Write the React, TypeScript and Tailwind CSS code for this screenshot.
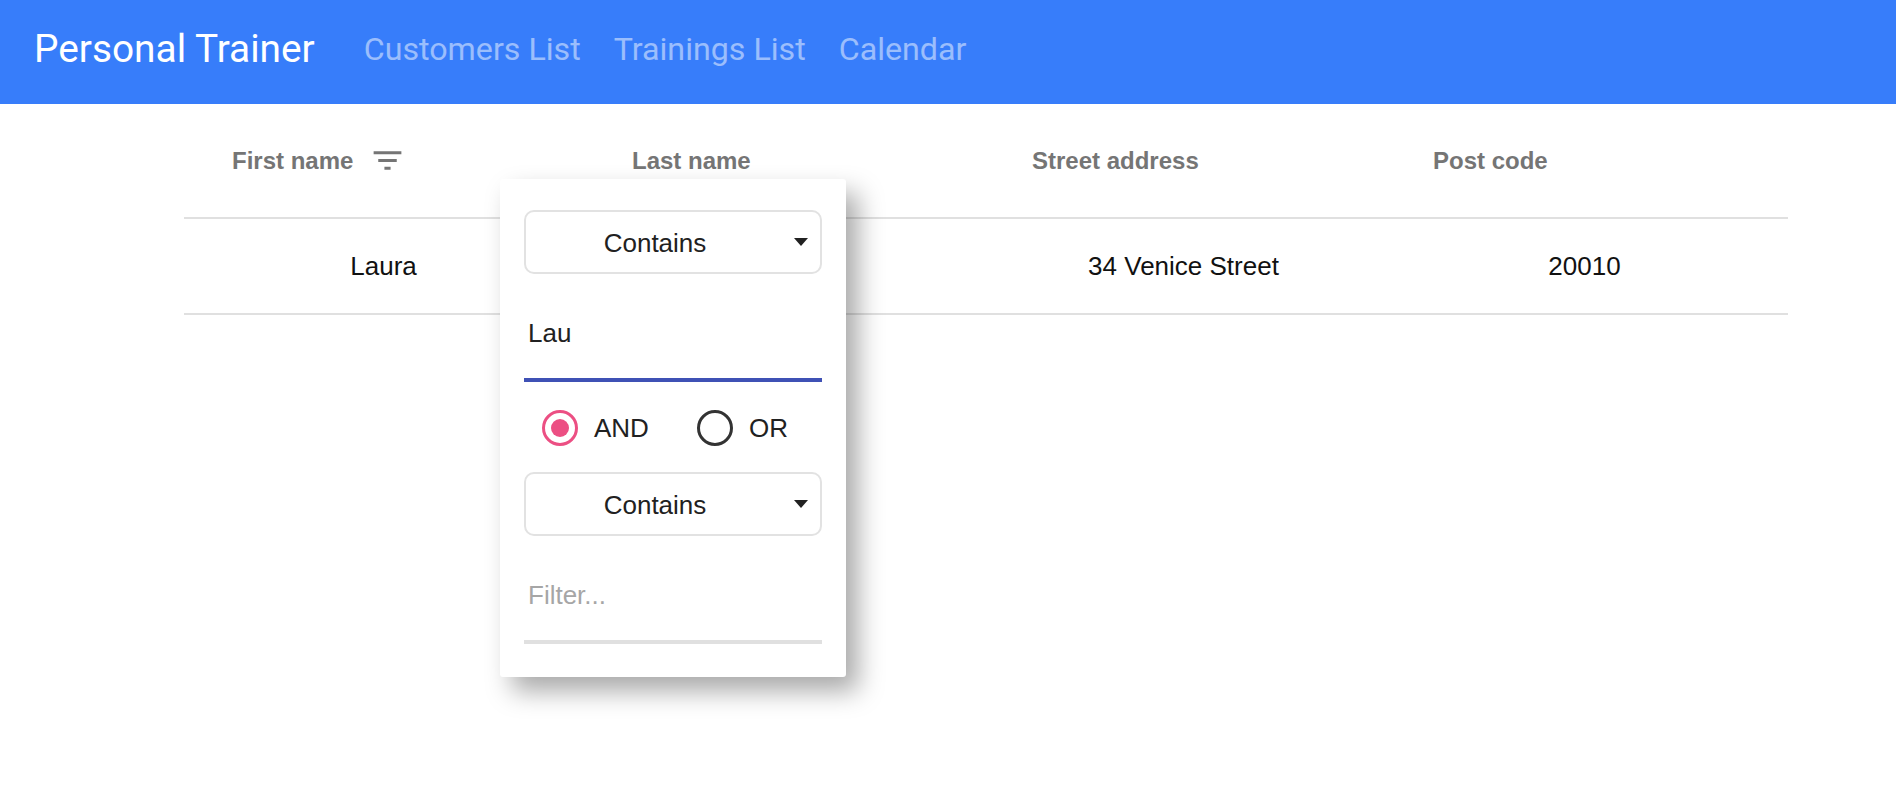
const sans = "font-['Liberation_Sans',Arial,sans-serif]";

const columns = ["First name", "Last name", "Street address", "Post code"];
const row = ["Laura", "", "34 Venice Street", "20010"];

function FilterIcon() {
  return (
    <svg width="37" height="37" viewBox="0 0 24 24" fill="#757575" className="ml-[16px]">
      <path d="M10 18h4v-2h-4v2zM3 6v2h18V6H3zm3 7h12v-2H6v2z" />
    </svg>
  );
}

function SelectBox() {
  return (
    <div className="relative flex h-[64px] w-[298px] items-center rounded-[10px] border-2 border-[#e2e2e2] bg-white">
      <span className="w-[258px] pt-[2px] text-center text-[26px] text-[#212121]">Contains</span>
      <span className="absolute right-[12px] top-[26px] h-0 w-0 border-x-[7px] border-t-[8px] border-x-transparent border-t-[#212121]" />
    </div>
  );
}

function FilterPopup() {
  return (
    <div className="absolute left-[500px] top-[179px] flex h-[498px] w-[346px] flex-col rounded-[3px] bg-white px-[24px] pt-[31px] shadow-[12px_14px_26px_rgba(0,0,0,0.34)]">
      <SelectBox />
      <div className="h-[108px] w-[298px] border-b-4 border-[#3f51b5] pl-[4px] pt-[44px] text-[26px] leading-[30px] text-[#212121]">
        Lau
      </div>
      <div className="mt-[28px] flex h-[36px] items-center pl-[18px] text-[26px] text-[#212121]">
        <span className="flex h-[36px] w-[36px] items-center justify-center rounded-full border-[3px] border-[#ec4f83]">
          <span className="h-[18px] w-[18px] rounded-full bg-[#ec4f83]" />
        </span>
        <span className="ml-[16px]">AND</span>
        <span className="ml-[48px] h-[36px] w-[36px] rounded-full border-[3px] border-[#333333]" />
        <span className="ml-[16px]">OR</span>
      </div>
      <div className="mt-[26px]">
        <SelectBox />
      </div>
      <div className="h-[108px] w-[298px] border-b-4 border-[#e0e0e0] pl-[4px] pt-[44px] text-[26px] leading-[30px] text-[#a6a6a6]">
        Filter...
      </div>
    </div>
  );
}

export default function App() {
  return (
    <div className={`relative h-[812px] w-[1896px] overflow-hidden bg-white ${sans}`}>
      <header className="flex h-[104px] items-center bg-[#377dfa] pb-[6px] pl-[34px] font-['Roboto',sans-serif]">
        <span className="text-[38.8px] text-white">Personal Trainer</span>
        <nav className="ml-[49px] flex gap-[33px] text-[32.2px] text-white/50">
          <span>Customers List</span>
          <span>Trainings List</span>
          <span>Calendar</span>
        </nav>
      </header>

      <main className="mx-[184px] w-[1604px]">
        <div className="grid h-[115px] grid-cols-[400px_400px_401px_1fr] border-b-2 border-[#e0e0e0]">
          {columns.map((col, i) => (
            <div key={col} className="flex items-center pl-[48px] text-[24px] font-bold text-[#757575]">
              {col}
              {i === 0 && <FilterIcon />}
            </div>
          ))}
        </div>
        <div className="grid h-[96px] grid-cols-[399px_399px_403px_399px] border-b-2 border-[#e0e0e0]">
          {row.map((cell, i) => (
            <div key={i} className="flex items-center justify-center text-[26px] text-[#111111]">
              {cell}
            </div>
          ))}
        </div>
      </main>

      <FilterPopup />
    </div>
  );
}
